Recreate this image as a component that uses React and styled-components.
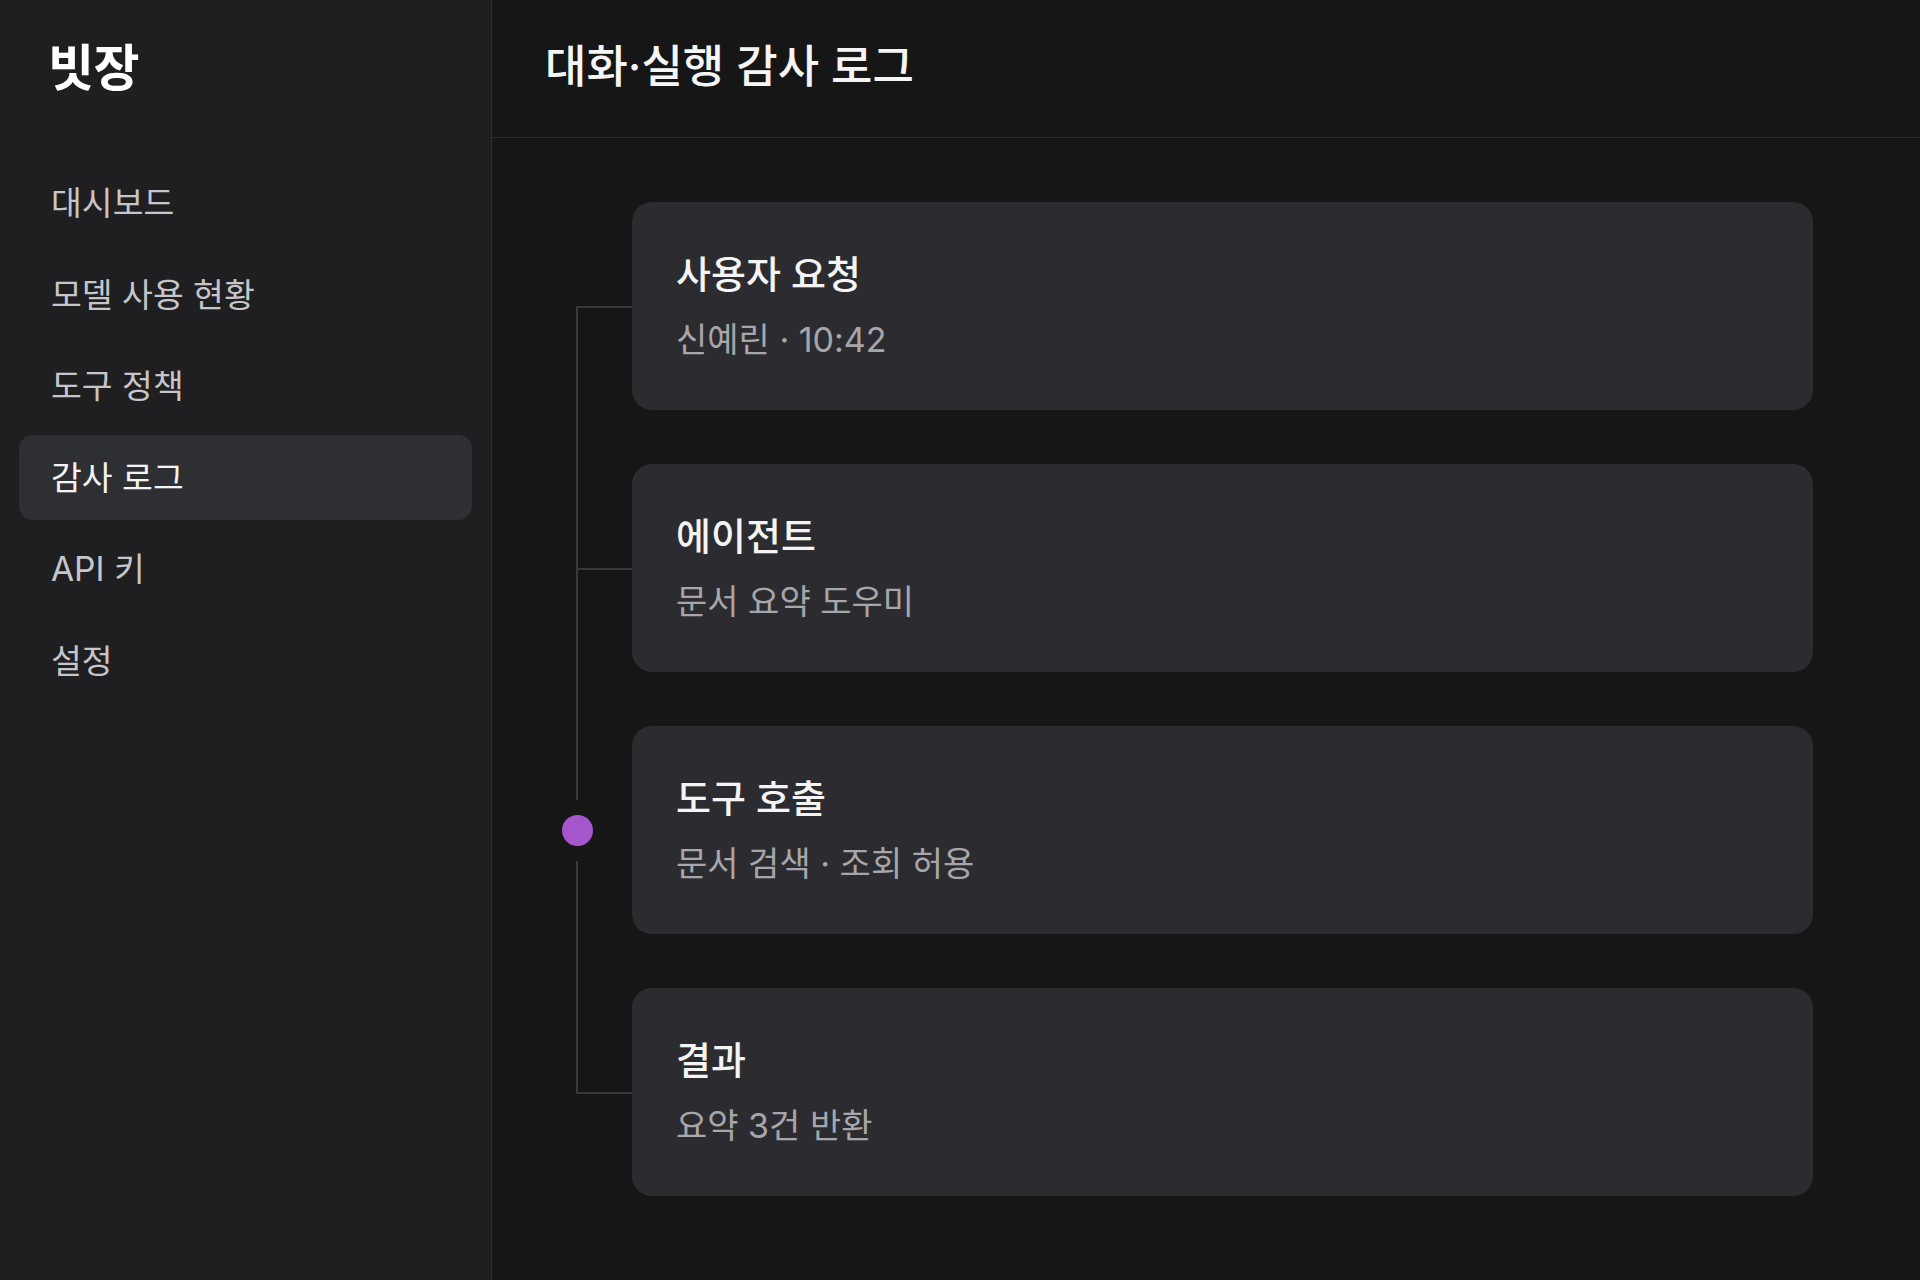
import styled, { createGlobalStyle } from 'styled-components';

const GlobalStyle = createGlobalStyle`
	* {
		box-sizing: border-box;
	}
	body {
		margin: 0;
		background: #161617;
		font-family: 'Inter', 'Noto Sans CJK KR', sans-serif;
		-webkit-font-smoothing: antialiased;
	}
`;

const Layout = styled.div`
	display: flex;
	min-height: 1280px;
`;

const Sidebar = styled.aside`
	width: 492px;
	flex-shrink: 0;
	padding: 0 19px;
	background: #1f1f22;
	border-right: 1px solid #2c2c2f;
`;

const Logo = styled.div`
	height: 137px;
	display: flex;
	align-items: center;
	padding: 0 0 10px 29px;
	color: #ffffff;
	font-size: 50px;
	font-weight: 700;
	letter-spacing: -0.5px;
`;

const Nav = styled.nav`
	display: flex;
	flex-direction: column;
	gap: 6.5px;
	margin-top: 23px;
`;

const NavItem = styled.div`
	height: 85px;
	display: flex;
	align-items: center;
	padding: 0 0 4px 32px;
	border-radius: 14px;
	font-size: 33.5px;
	color: ${(p) => (p.$active ? '#f4f4f5' : '#c6c6ca')};
	background: ${(p) => (p.$active ? '#2e2f33' : 'transparent')};
	cursor: pointer;
`;

const Main = styled.main`
	flex: 1;
	display: flex;
	flex-direction: column;
`;

const Header = styled.header`
	height: 138px;
	display: flex;
	align-items: center;
	padding: 0 0 10px 53px;
	border-bottom: 1px solid #2c2c2f;
`;

const PageTitle = styled.h1`
	margin: 0;
	color: #f5f5f5;
	font-size: 45px;
	font-weight: 500;
`;

const Content = styled.section`
	padding: 64px 107px 0 140px;
`;

const Timeline = styled.div`
	position: relative;
	display: flex;
	flex-direction: column;
	gap: 54px;

	&::before {
		content: '';
		position: absolute;
		left: -56px;
		top: 104px;
		bottom: 103px;
		width: 2px;
		background: #3a3a3d;
	}
`;

const Card = styled.div`
	position: relative;
	height: 208px;
	display: flex;
	flex-direction: column;
	justify-content: center;
	gap: 24px;
	padding-left: 44px;
	border-radius: 20px;
	background: #2c2c30;

	&::before {
		content: '';
		display: ${(p) => (p.$current ? 'none' : 'block')};
		position: absolute;
		left: -56px;
		top: 50%;
		width: 56px;
		height: 2px;
		background: #3a3a3d;
	}
`;

const Dot = styled.span`
	position: absolute;
	left: -70px;
	top: 50%;
	width: 31px;
	height: 31px;
	margin-top: -15px;
	border-radius: 50%;
	background: #a656cc;
	box-shadow: 0 0 0 15px #161617;
`;

const CardTitle = styled.div`
	color: #f4f4f5;
	font-size: 38px;
	font-weight: 500;
	line-height: 44px;
`;

const CardMeta = styled.div`
	color: #a6a6ab;
	font-size: 34px;
	line-height: 40px;
`;

const navItems = ['대시보드', '모델 사용 현황', '도구 정책', '감사 로그', 'API 키', '설정'];

const events = [
	{ title: '사용자 요청', meta: '신예린 · 10:42' },
	{ title: '에이전트', meta: '문서 요약 도우미' },
	{ title: '도구 호출', meta: '문서 검색 · 조회 허용', current: true },
	{ title: '결과', meta: '요약 3건 반환' },
];

function App() {
	return (
		<>
			<GlobalStyle />
			<Layout>
				<Sidebar>
					<Logo>빗장</Logo>
					<Nav>
						{navItems.map((item) => (
							<NavItem key={item} $active={item === '감사 로그'}>
								{item}
							</NavItem>
						))}
					</Nav>
				</Sidebar>
				<Main>
					<Header>
						<PageTitle>대화·실행 감사 로그</PageTitle>
					</Header>
					<Content>
						<Timeline>
							{events.map((e) => (
								<Card key={e.title} $current={e.current}>
									{e.current && <Dot />}
									<CardTitle>{e.title}</CardTitle>
									<CardMeta>{e.meta}</CardMeta>
								</Card>
							))}
						</Timeline>
					</Content>
				</Main>
			</Layout>
		</>
	);
}

export default App;
